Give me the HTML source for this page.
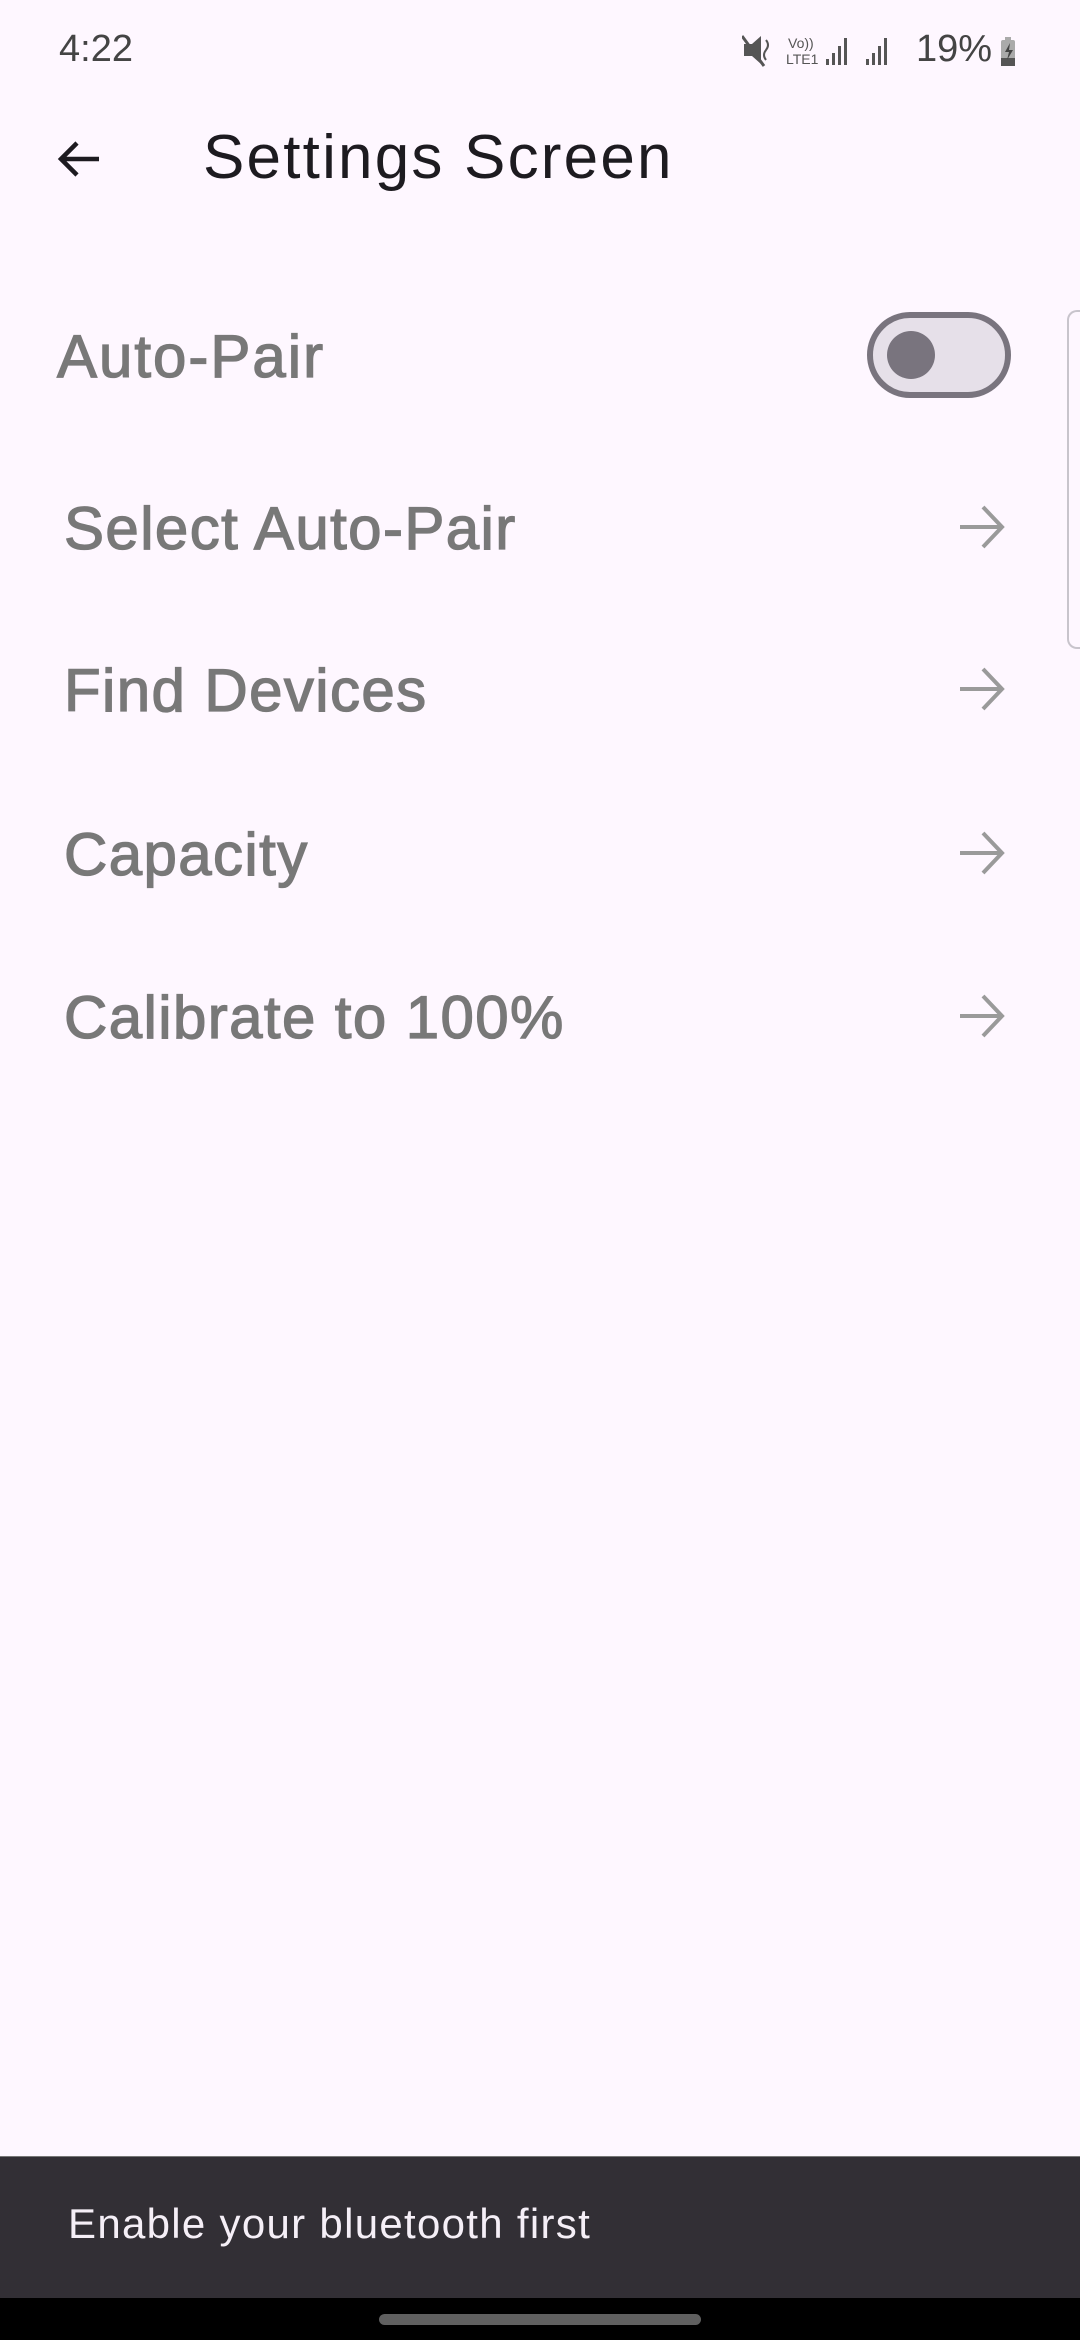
<!DOCTYPE html>
<html><head><meta charset="utf-8"><style>
*{margin:0;padding:0;box-sizing:border-box}
body{width:1080px;height:2340px;background:#fef7ff;position:relative;overflow:hidden;font-family:"Liberation Sans",sans-serif}
.a{position:absolute;white-space:nowrap}
.item{position:absolute;left:64px;font-size:60px;color:#787878;line-height:1;-webkit-text-stroke:1.3px #787878;letter-spacing:1.4px}
.arr{position:absolute;left:958px;width:48px;height:48px}
</style></head><body>
<div class="a" style="left:59px;top:28px;font-size:38px;color:#444">4:22</div>
<div class="a" style="left:742px;top:32px;height:36px;width:280px">
<svg width="300" height="40" viewBox="0 0 300 40">
<path d="M2 12h8l9-8v28l-9-8H2z" fill="#555"/><path d="M0 4l22 30" stroke="#555" stroke-width="3"/>
<path d="M24 8q4 5 0 10q-4 5 0 10" stroke="#555" stroke-width="2" fill="none"/>
<text x="46" y="16" font-size="14" fill="#555" font-family="Liberation Sans">Vo))</text>
<text x="44" y="32" font-size="14" fill="#555" font-family="Liberation Sans">LTE1</text>
<rect x="84" y="27" width="3" height="6" fill="#555"/><rect x="90" y="21" width="3" height="12" fill="#555"/><rect x="96" y="14" width="3" height="19" fill="#555"/><rect x="102" y="6" width="3" height="27" fill="#555"/>
<rect x="124" y="27" width="3" height="6" fill="#555"/><rect x="130" y="21" width="3" height="12" fill="#555"/><rect x="136" y="14" width="3" height="19" fill="#555"/><rect x="142" y="6" width="3" height="27" fill="#555"/>
<rect x="259" y="8" width="14" height="26" rx="2" fill="#aaa"/><rect x="259" y="26" width="14" height="8" fill="#555"/><rect x="263" y="5" width="6" height="3" fill="#aaa"/>
<path d="M268 11l-5 9h4l-2 8 6-10h-4z" fill="#444"/>
</svg></div>
<div class="a" style="left:916px;top:28px;font-size:38px;color:#444">19%</div>
<svg class="a" style="left:55px;top:135px" width="48" height="48" viewBox="0 0 48 48"><path d="M44 24H6M22 8L6 24l16 16" stroke="#1d1b20" stroke-width="4.5" fill="none"/></svg>
<div class="a" style="left:203px;top:124px;font-size:62px;color:#1d1b20;line-height:1.1;letter-spacing:2.2px">Settings Screen</div>
<div class="item" style="left:57px;top:327px;letter-spacing:2px">Auto-Pair</div>
<div class="a" style="left:867px;top:312px;width:144px;height:86px;border-radius:43px;background:#e6e0e9;border:6px solid #79747e"></div>
<div class="a" style="left:887px;top:331px;width:48px;height:48px;border-radius:24px;background:#79747e"></div>
<div class="a" style="left:1067px;top:310px;width:20px;height:339px;border:2px solid #c8c4cc;border-right:none;border-radius:10px 0 0 10px"></div>
<div class="item" style="top:499px">Select Auto-Pair</div>
<div class="item" style="top:661px">Find Devices</div>
<div class="item" style="top:825px">Capacity</div>
<div class="item" style="top:988px">Calibrate to 100%</div>
<svg class="arr" style="top:503px" viewBox="0 0 48 48"><path d="M2 24h42M25 4l19 20-19 20" stroke="#9a9a9a" stroke-width="4" fill="none"/></svg>
<svg class="arr" style="top:665px" viewBox="0 0 48 48"><path d="M2 24h42M25 4l19 20-19 20" stroke="#9a9a9a" stroke-width="4" fill="none"/></svg>
<svg class="arr" style="top:829px" viewBox="0 0 48 48"><path d="M2 24h42M25 4l19 20-19 20" stroke="#9a9a9a" stroke-width="4" fill="none"/></svg>
<svg class="arr" style="top:992px" viewBox="0 0 48 48"><path d="M2 24h42M25 4l19 20-19 20" stroke="#9a9a9a" stroke-width="4" fill="none"/></svg>
<div class="a" style="left:0;top:2156px;width:1080px;height:142px;background:#322f35;border-top:1px solid #777"></div>
<div class="a" style="left:68px;top:2201px;font-size:42px;color:#f5eff7;line-height:1.1;letter-spacing:1.3px">Enable your bluetooth first</div>
<div class="a" style="left:0;top:2298px;width:1080px;height:42px;background:#000"></div>
<div class="a" style="left:379px;top:2314px;width:322px;height:11px;border-radius:6px;background:#606060"></div>
</body></html>
